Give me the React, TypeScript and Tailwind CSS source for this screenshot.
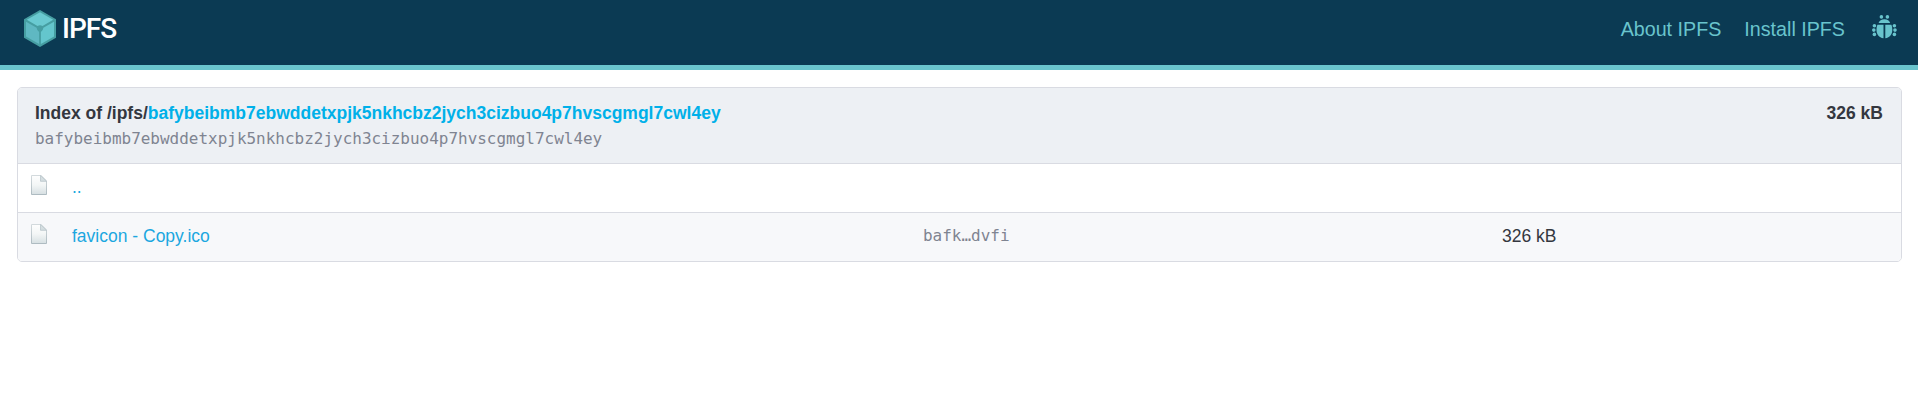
function Cube() {
  return (
    <svg className="block h-[37px] w-8" viewBox="0 0 32 37">
      <path d="M16 0 32 9.2v18.6L16 37 0 27.8V9.2z" fill="#469ea2" />
      <path d="M16 2.2 29.2 9.8 18.5 16q-2.5-1.3-5 0L2.8 9.8z" fill="#6acad1" />
      <path d="M2 11.7 12.6 17.8q.3 2.8 2.5 4.2V34L2 26.5z" fill="#5fb8c2" />
      <path d="M30 11.7 19.4 17.8q-.3 2.8-2.5 4.2V34L30 26.5z" fill="#64c6cd" />
    </svg>
  );
}

function Bug() {
  return (
    <svg className="block h-6 w-[25px]" viewBox="0 0 25 24" fill="#69c4cd">
      <circle cx="9.4" cy="1.9" r="1.8" />
      <circle cx="15.4" cy="1.9" r="1.8" />
      <path d="M12.4 4.2c3 0 5.2 1.4 5.8 3.8H6.6c.6-2.4 2.8-3.8 5.8-3.8z" />
      <path d="M5.4 9.8h6.1v13.4C6.9 22.7 4.5 19.4 4.5 14.7c0-1.9.3-3.5.9-4.9z" />
      <path d="M19.4 9.8h-6.1v13.4c4.6-.5 7-3.8 7-8.5 0-1.9-.3-3.5-.9-4.9z" />
      <circle cx="2.4" cy="10.8" r="1.8" />
      <circle cx="1.8" cy="15.1" r="1.8" />
      <circle cx="2.4" cy="19.4" r="1.8" />
      <circle cx="22.4" cy="10.8" r="1.8" />
      <circle cx="23" cy="15.1" r="1.8" />
      <circle cx="22.4" cy="19.4" r="1.8" />
    </svg>
  );
}

function FileIcon() {
  return (
    <svg className="block h-5 w-4" viewBox="0 0 16 20">
      <defs>
        <linearGradient id="page" x1="0" y1="0" x2="0" y2="1">
          <stop offset="0" stopColor="#fefefe" />
          <stop offset=".5" stopColor="#f3f6f6" />
          <stop offset="1" stopColor="#d6dfe2" />
        </linearGradient>
        <linearGradient id="edge" x1="0" y1="0" x2="0" y2="1">
          <stop offset="0" stopColor="#d3dadd" />
          <stop offset="1" stopColor="#aebbc1" />
        </linearGradient>
      </defs>
      <path d="M.5.5h9.7l5.3 5.3v13.7H.5z" fill="url(#page)" stroke="url(#edge)" />
      <path d="M9.5.5v5.8h6z" fill="#d5dee1" stroke="#b9c5ca" strokeWidth=".8" />
    </svg>
  );
}

const cid = "bafybeibmb7ebwddetxpjk5nkhcbz2jych3cizbuo4p7hvscgmgl7cwl4ey";

const files = [
  { name: "..", hash: "", size: "" },
  { name: "favicon - Copy.ico", hash: "bafk…dvfi", size: "326 kB" },
];

export default function App() {
  return (
    <div className="min-h-[402px] bg-white font-['Liberation_Sans',Arial,sans-serif] text-[17.5px] text-[#34373f]">
      <header className="flex h-[70px] justify-between border-b-5 border-[#69c4cd] bg-[#0b3a53] pr-[21px] pl-6">
        <a className="flex items-start gap-1.5 pt-2.5">
          <Cube />
          <span className="pt-px font-[Roboto,sans-serif] text-[28px] leading-9 font-medium tracking-[-1px] text-white">IPFS</span>
        </a>
        <nav className="flex items-start pt-3.5 text-[19.7px] leading-[30px] text-[#69c4cd]">
          <a>About IPFS</a>
          <a className="ml-[23px]">Install IPFS</a>
          <a className="ml-[27px] pt-px">
            <Bug />
          </a>
        </nav>
      </header>
      <main className="mt-[17px] mr-4 ml-[17px] overflow-hidden rounded-[5px] border border-[#d9dbe2]">
        <div className="flex h-[75px] justify-between bg-[#edf0f4] pt-3 pr-[18px] pl-[17px] leading-[26px]">
          <div>
            <div className="font-bold">
              Index of /ipfs/<a className="text-[#00b0e9]">{cid}</a>
            </div>
            <div className="font-['DejaVu_Sans_Mono',monospace] text-[15.98px] leading-[25px] text-[#7f8491]">{cid}</div>
          </div>
          <strong>326 kB</strong>
        </div>
        {files.map((file) => (
          <div
            key={file.name}
            className="grid h-[49px] grid-cols-[41px_851px_579px_1fr] items-start border-t border-[#d9dbe2] pt-[11px] pl-[13px] leading-6 even:bg-white odd:bg-[#f7f8fa]"
          >
            <FileIcon />
            <a className="text-[#1ba7e0]">{file.name}</a>
            <span className="font-['DejaVu_Sans_Mono',monospace] text-[15.98px] text-[#7f8491]">{file.hash}</span>
            <span>{file.size}</span>
          </div>
        ))}
      </main>
    </div>
  );
}
